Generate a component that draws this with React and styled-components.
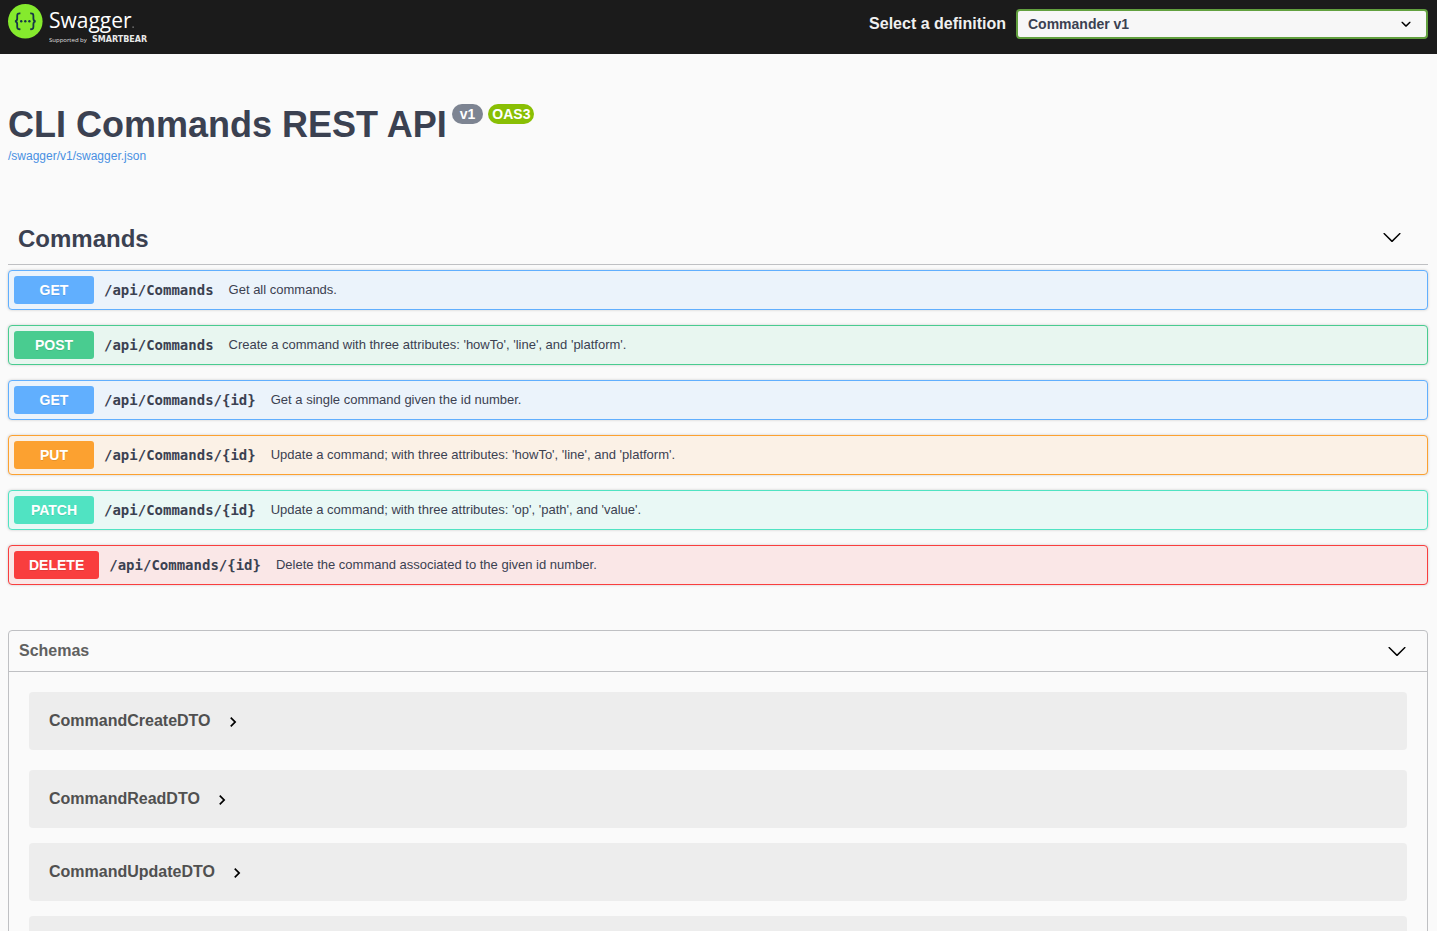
import React from "react";
import styled, { createGlobalStyle } from "styled-components";

const GlobalStyle = createGlobalStyle`
  *, *::before, *::after { box-sizing: border-box; }
  body {
    margin: 0;
    background: #fafafa;
    color: #3b4151;
    font-family: "Liberation Sans", Arial, sans-serif;
  }
  button { font-family: inherit; color: inherit; cursor: pointer; }
`;

const Page = styled.div`
  height: 100vh;
  overflow: hidden;
`;

const Topbar = styled.header`
  display: flex;
  align-items: flex-start;
  justify-content: space-between;
  height: 54px;
  padding: 0 9px 0 8px;
  background: #1b1b1b;
`;

const LogoLink = styled.a`
  display: block;
  padding-top: 4px;
  svg { display: block; }
`;

const DefinitionForm = styled.form`
  display: flex;
  align-items: center;
  gap: 10px;
  padding-top: 9px;
`;

const DefinitionLabel = styled.label`
  color: #f0f0f0;
  font-size: 16px;
  font-weight: 700;
  line-height: 28px;
`;

const SelectBox = styled.div`
  position: relative;
  width: 412px;
  svg {
    position: absolute;
    top: 5px;
    right: 12px;
    pointer-events: none;
  }
`;

const Select = styled.select`
  display: block;
  width: 100%;
  height: 30px;
  padding: 0 40px 0 10px;
  appearance: none;
  border: 2px solid #62a03f;
  border-radius: 4px;
  background: #f7f7f7;
  color: #3b4151;
  font: 700 14px "Liberation Sans", Arial, sans-serif;
`;

const Content = styled.main`
  padding: 50px 9px 0 8px;
`;

const Info = styled.section`
  display: flex;
  flex-direction: column;
  align-items: flex-start;
  gap: 4px;
`;

const TitleRow = styled.div`
  display: flex;
  align-items: flex-start;
  gap: 5px;
`;

const Title = styled.h1`
  margin: 0;
  font-size: 36px;
  line-height: 41px;
`;

const Badge = styled.span`
  height: 20px;
  padding: 0 ${(p) => (p.$wide ? 8 : 4)}px;
  border-radius: 10px;
  background: ${(p) => p.$color};
  color: #fff;
  font-size: 14px;
  font-weight: 700;
  line-height: 20px;
`;

const SpecLink = styled.a`
  color: #4990e2;
  font-size: 12px;
  line-height: 14px;
  text-decoration: none;
`;

const TagSection = styled.section`
  padding-top: 50px;
`;

const TagHeading = styled.h2`
  margin: 0 0 5px;
  border-bottom: 1px solid #bfc0c3;
`;

const TagToggle = styled.button`
  display: flex;
  align-items: center;
  justify-content: space-between;
  width: 100%;
  height: 51px;
  padding: 0 26px 0 10px;
  border: 0;
  background: none;
  font-size: 24px;
  font-weight: 700;
  svg { margin-bottom: 4px; }
`;

const Operations = styled.div`
  display: flex;
  flex-direction: column;
  gap: 15px;
`;

const Operation = styled.button`
  display: flex;
  align-items: center;
  width: 100%;
  height: 40px;
  padding: 0 5px;
  border: 1px solid ${(p) => p.$color};
  border-radius: 4px;
  background: ${(p) => p.$tint};
  box-shadow: 0 0 3px rgba(0, 0, 0, 0.19);
  text-align: left;
`;

const Method = styled.span`
  min-width: 80px;
  padding: 0 15px;
  border-radius: 3px;
  background: ${(p) => p.$color};
  color: #fff;
  font-size: 14px;
  font-weight: 700;
  line-height: 28px;
  text-align: center;
  text-shadow: 0 1px 0 rgba(0, 0, 0, 0.1);
`;

const Path = styled.span`
  padding: 0 15px 0 10px;
  font: 700 14px "DejaVu Sans Mono", monospace;
`;

const Summary = styled.span`
  padding-bottom: 2px;
  font-size: 13px;
`;

const Models = styled.section`
  margin-top: 45px;
  border: 1px solid #bfc0c3;
  border-radius: 4px;
`;

const ModelsHeading = styled.h3`
  margin: 0;
  border-bottom: 1px solid #bfc0c3;
`;

const ModelsToggle = styled.button`
  display: flex;
  align-items: center;
  justify-content: space-between;
  width: 100%;
  height: 40px;
  padding: 0 20px 0 10px;
  border: 0;
  background: none;
  color: #606060;
  font-size: 16px;
  font-weight: 700;
`;

const ModelList = styled.div`
  display: flex;
  flex-direction: column;
  gap: 15px;
  padding: 20px;
`;

const Model = styled.div`
  display: flex;
  align-items: center;
  height: 58px;
  padding: 0 20px;
  border-radius: 4px;
  background: #ededed;
  &:first-child { margin-bottom: 5px; }
`;

const ModelToggle = styled.button`
  display: flex;
  align-items: center;
  gap: 12px;
  padding: 0;
  border: 0;
  background: none;
  color: #505050;
  font-size: 16px;
  font-weight: 700;
  svg { margin-top: 2px; }
`;

const Chevron = () => (
  <svg width="20" height="20" viewBox="0 0 20 20" fill="#000" aria-hidden="true">
    <path d="M17.418 6.109c.272-.268.709-.268.979 0s.271.701 0 .969l-7.908 7.83c-.27.268-.707.268-.979 0l-7.908-7.83c-.27-.268-.27-.701 0-.969s.709-.268.979 0L10 13.25z" />
  </svg>
);

const SmallChevron = () => (
  <svg width="20" height="20" viewBox="0 0 20 20" fill="#000" aria-hidden="true">
    <path d="M13.418 7.859c.271-.268.709-.268.978 0s.272.701 0 .969l-3.908 3.83c-.27.268-.707.268-.979 0l-3.908-3.83c-.27-.267-.27-.701 0-.969s.709-.268.978 0L10 11z" />
  </svg>
);

const RightArrow = () => (
  <svg width="20" height="20" viewBox="0 0 24 24" fill="#000" aria-hidden="true">
    <path d="M10 6L8.59 7.41 13.17 12l-4.58 4.59L10 18l6-6z" />
  </svg>
);

const Logo = () => (
  <svg width="144" height="44" viewBox="0 0 144 44" role="img" aria-label="Swagger, supported by SmartBear">
    <circle cx="17.3" cy="17.3" r="17.3" fill="#85ea2d" />
    <g fill="none" stroke="#173647" strokeWidth="1.8">
      <path d="M12.4 9.4c-2.3-.2-3.2.5-3.2 2.5v2.6c0 1.7-.6 2.6-2.2 2.8 1.6.2 2.2 1.1 2.2 2.8v2.6c0 2 .9 2.7 3.2 2.5" />
      <path d="M22.2 9.4c2.3-.2 3.2.5 3.2 2.5v2.6c0 1.7.6 2.6 2.2 2.8-1.6.2-2.2 1.1-2.2 2.8v2.6c0 2-.9 2.7-3.2 2.5" />
    </g>
    <g fill="#173647">
      <circle cx="13.2" cy="17.3" r="1.2" />
      <circle cx="17.3" cy="17.3" r="1.2" />
      <circle cx="21.4" cy="17.3" r="1.2" />
    </g>
    <g fill="#fff">
      <text x="41" y="24" fontFamily="'Open Sans', sans-serif" fontSize="21">Swagger</text>
      <rect x="124.5" y="22.6" width="1.2" height="1" opacity="0.7" />
      <text x="41" y="38" fontFamily="'Open Sans', sans-serif" fontSize="6" opacity="0.85">Supported by</text>
      <text x="84" y="38" fontFamily="'DejaVu Sans', sans-serif" fontSize="8" fontWeight="700" opacity="0.9">SMARTBEAR</text>
    </g>
  </svg>
);

const METHODS = {
  GET: { color: "#61affe", tint: "#ebf3fb" },
  POST: { color: "#49cc90", tint: "#e8f6f0" },
  PUT: { color: "#fca130", tint: "#fbf1e6" },
  PATCH: { color: "#50e3c2", tint: "#e9f8f5" },
  DELETE: { color: "#f93e3e", tint: "#fae7e7" },
};

const OPERATIONS = [
  ["GET", "/api/Commands", "Get all commands."],
  ["POST", "/api/Commands", "Create a command with three attributes: 'howTo', 'line', and 'platform'."],
  ["GET", "/api/Commands/{id}", "Get a single command given the id number."],
  ["PUT", "/api/Commands/{id}", "Update a command; with three attributes: 'howTo', 'line', and 'platform'."],
  ["PATCH", "/api/Commands/{id}", "Update a command; with three attributes: 'op', 'path', and 'value'."],
  ["DELETE", "/api/Commands/{id}", "Delete the command associated to the given id number."],
];

const MODELS = ["CommandCreateDTO", "CommandReadDTO", "CommandUpdateDTO"];

export default function App() {
  return (
    <Page>
      <GlobalStyle />
      <Topbar>
        <LogoLink href="#"><Logo /></LogoLink>
        <DefinitionForm>
          <DefinitionLabel htmlFor="definition">Select a definition</DefinitionLabel>
          <SelectBox>
            <Select id="definition" defaultValue="v1">
              <option value="v1">Commander v1</option>
            </Select>
            <SmallChevron />
          </SelectBox>
        </DefinitionForm>
      </Topbar>
      <Content>
        <Info>
          <TitleRow>
            <Title>CLI Commands REST API</Title>
            <Badge $color="#7d8492" $wide>v1</Badge>
            <Badge $color="#89bf04">OAS3</Badge>
          </TitleRow>
          <SpecLink href="#">/swagger/v1/swagger.json</SpecLink>
        </Info>
        <TagSection>
          <TagHeading>
            <TagToggle type="button">Commands<Chevron /></TagToggle>
          </TagHeading>
          <Operations>
            {OPERATIONS.map(([method, path, summary]) => (
              <Operation
                key={method + path}
                type="button"
                $color={METHODS[method].color}
                $tint={METHODS[method].tint}
              >
                <Method $color={METHODS[method].color}>{method}</Method>
                <Path>{path}</Path>
                <Summary>{summary}</Summary>
              </Operation>
            ))}
          </Operations>
        </TagSection>
        <Models>
          <ModelsHeading>
            <ModelsToggle type="button">Schemas<Chevron /></ModelsToggle>
          </ModelsHeading>
          <ModelList>
            {MODELS.map((name) => (
              <Model key={name}>
                <ModelToggle type="button">{name}<RightArrow /></ModelToggle>
              </Model>
            ))}
            <Model />
          </ModelList>
        </Models>
      </Content>
    </Page>
  );
}
